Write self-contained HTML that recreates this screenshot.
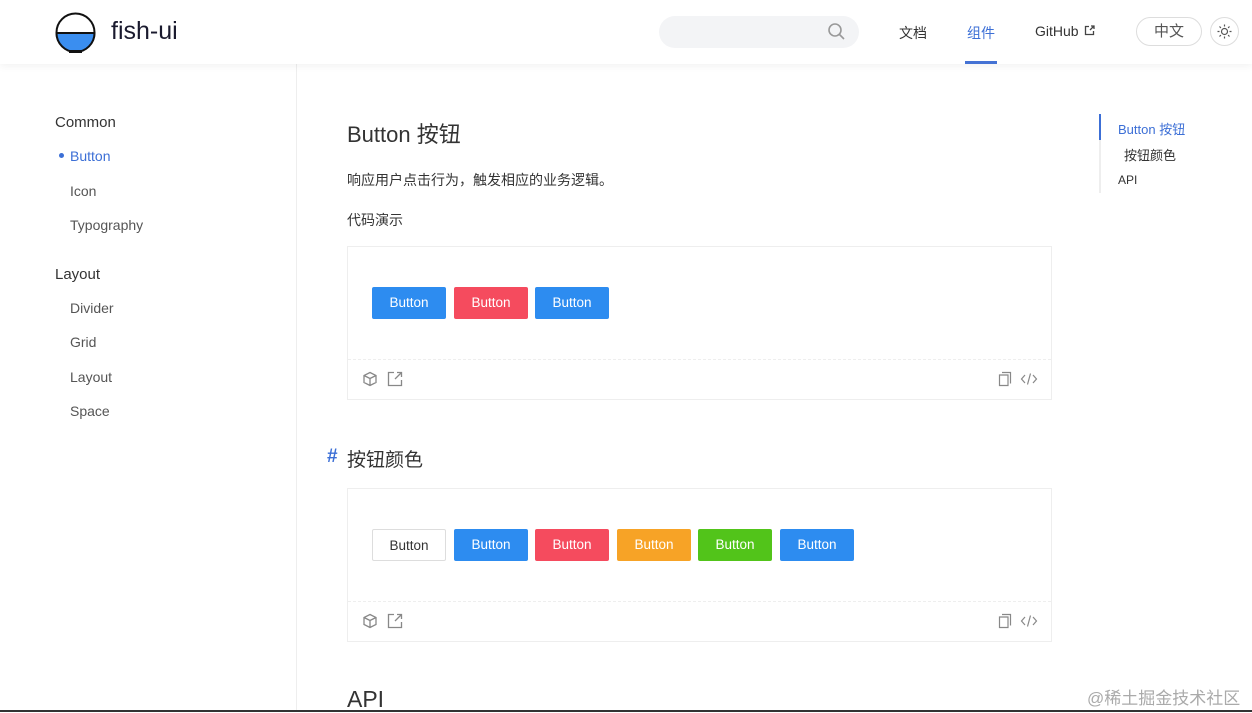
<!DOCTYPE html>
<html><head><meta charset="utf-8"><style>
*{margin:0;padding:0;box-sizing:border-box}
body{width:1252px;height:712px;overflow:hidden;background:#fff;font-family:"Liberation Sans","Noto Sans CJK SC",sans-serif;color:#333;position:relative}
.hdr{position:absolute;left:0;top:0;width:1252px;height:64px;background:#fff;box-shadow:0 2px 8px rgba(0,0,0,.06);z-index:2}
.abs{position:absolute}
.side{position:absolute;left:0;top:64px;width:297px;height:648px;border-right:1px solid #eee}
.grp{position:absolute;left:55px;font-size:15px;color:#333}
.it{position:absolute;left:70px;font-size:14px;color:#555}
.btn{position:absolute;height:32px;width:74px;color:#fff;font-size:13.5px;text-align:center;line-height:32px;border-radius:2px}
.box{position:absolute;left:347px;width:705px;border:1px solid #eee}
.foot{position:absolute;left:0;right:0;border-top:1px dashed #eee;height:40px}
.foot svg{position:absolute;top:11px}
</style></head><body>
<div class="hdr">
<svg class="abs" style="left:55px;top:12px" width="41" height="41" viewBox="0 0 41 41"><circle cx="20.5" cy="20.5" r="19" fill="#fff" stroke="#111" stroke-width="2"/><path d="M1.5 21 H39.5 A19 19 0 0 1 1.5 21Z" fill="#3a8ef0" stroke="#111" stroke-width="2"/><rect x="14" y="38" width="13" height="3" fill="#111"/></svg>
<div class="abs" style="left:111px;top:17px;font-size:25px;color:#1a1a2e;font-weight:500">fish-ui</div>
<div class="abs" style="left:659px;top:16px;width:200px;height:32px;border-radius:16px;background:#f3f4f6"></div>
<svg class="abs" style="left:827px;top:22px" width="20" height="20" viewBox="0 0 20 20" fill="none" stroke="#999" stroke-width="1.6"><circle cx="8" cy="8" r="6"/><path d="M12.5 12.5 L17 17"/></svg>
<div class="abs" style="left:899px;top:23px;font-size:14px;color:#333">文档</div>
<div class="abs" style="left:967px;top:23px;font-size:14px;color:#3c6fd6">组件</div>
<div class="abs" style="left:965px;top:61px;width:32px;height:3px;background:#4472d4"></div>
<div class="abs" style="left:1035px;top:23px;font-size:14px;color:#333">GitHub</div>
<svg class="abs" style="left:1084px;top:25px" width="11" height="11" viewBox="0 0 11 11" fill="none" stroke="#444" stroke-width="1.3"><path d="M5 1.5H1.5V9.5H9.5V6"/><path d="M6 5L10 1M7 1H10V4"/></svg>
<div class="abs" style="left:1136px;top:17px;width:66px;height:29px;border:1px solid #ddd;border-radius:15px;text-align:center;line-height:27px;font-size:15px;color:#555">中文</div>
<div class="abs" style="left:1210px;top:17px;width:29px;height:29px;border:1px solid #ddd;border-radius:50%"></div>
<svg class="abs" style="left:1216px;top:23px" width="17" height="17" viewBox="0 0 17 17" fill="none" stroke="#555" stroke-width="1.2"><circle cx="8.5" cy="8.5" r="3"/><path d="M8.5 1.5v2M8.5 13.5v2M1.5 8.5h2M13.5 8.5h2M3.5 3.5l1.4 1.4M12.1 12.1l1.4 1.4M3.5 13.5l1.4-1.4M12.1 4.9l1.4-1.4"/></svg>
</div>
<div class="side">
<div class="grp" style="top:50px">Common</div>
<div class="abs" style="left:59px;top:89px;width:5px;height:5px;border-radius:50%;background:#3c6fd6"></div>
<div class="it" style="top:84px;color:#3c6fd6">Button</div>
<div class="it" style="top:119px">Icon</div>
<div class="it" style="top:153px">Typography</div>
<div class="grp" style="top:202px">Layout</div>
<div class="it" style="top:236px">Divider</div>
<div class="it" style="top:270px">Grid</div>
<div class="it" style="top:305px">Layout</div>
<div class="it" style="top:339px">Space</div>
</div>
<div class="abs" style="left:347px;top:117px;font-size:22px;color:#333">Button 按钮</div>
<div class="abs" style="left:347px;top:170px;font-size:14px">响应用户点击行为，触发相应的业务逻辑。</div>
<div class="abs" style="left:347px;top:210px;font-size:14px">代码演示</div>
<div class="box" style="top:246px;height:154px">
<div class="btn" style="left:24px;top:40px;background:#2d8cf0">Button</div>
<div class="btn" style="left:106px;top:40px;background:#f54b5e">Button</div>
<div class="btn" style="left:187px;top:40px;background:#2d8cf0">Button</div>
<div class="foot" style="top:112px">
<svg style="left:14px" width="16" height="16" viewBox="0 0 16 16" fill="none" stroke="#888" stroke-width="1.3"><path d="M8 1.5L14 4.5V11.5L8 14.5L2 11.5V4.5Z M2 4.5L8 7.5L14 4.5 M8 7.5V14.5"/></svg>
<svg style="left:39px" width="16" height="16" viewBox="0 0 16 16" fill="none" stroke="#888" stroke-width="1.3"><path d="M7 1.5H1.5V14.5H14.5V9"/><path d="M8 8L14.5 1.5M10 1.5H14.5V6"/></svg>
<svg style="left:650px" width="14" height="16" viewBox="0 0 14 16" fill="none" stroke="#888" stroke-width="1.2"><path d="M4 1.5H12.5V12.5M1.5 4H10V14.5H1.5Z"/></svg>
<svg style="left:672px" width="18" height="16" viewBox="0 0 18 16" fill="none" stroke="#888" stroke-width="1.2"><path d="M5 4L1.5 8L5 12M13 4L16.5 8L13 12M10.5 2.5L7.5 13.5"/></svg>
</div></div>
<div class="abs" style="left:327px;top:446px;font-size:19px;color:#3c6fd6;font-weight:bold">#</div>
<div class="abs" style="left:347px;top:445px;font-size:19px;color:#333">按钮颜色</div>
<div class="box" style="top:488px;height:154px">
<div class="btn" style="left:24px;top:40px;background:#fff;color:#333;border:1px solid #ddd">Button</div>
<div class="btn" style="left:106px;top:40px;background:#2d8cf0">Button</div>
<div class="btn" style="left:187px;top:40px;background:#f54b5e">Button</div>
<div class="btn" style="left:269px;top:40px;background:#f7a326">Button</div>
<div class="btn" style="left:350px;top:40px;background:#52c41a">Button</div>
<div class="btn" style="left:432px;top:40px;background:#2d8cf0">Button</div>
<div class="foot" style="top:112px">
<svg style="left:14px" width="16" height="16" viewBox="0 0 16 16" fill="none" stroke="#888" stroke-width="1.3"><path d="M8 1.5L14 4.5V11.5L8 14.5L2 11.5V4.5Z M2 4.5L8 7.5L14 4.5 M8 7.5V14.5"/></svg>
<svg style="left:39px" width="16" height="16" viewBox="0 0 16 16" fill="none" stroke="#888" stroke-width="1.3"><path d="M7 1.5H1.5V14.5H14.5V9"/><path d="M8 8L14.5 1.5M10 1.5H14.5V6"/></svg>
<svg style="left:650px" width="14" height="16" viewBox="0 0 14 16" fill="none" stroke="#888" stroke-width="1.2"><path d="M4 1.5H12.5V12.5M1.5 4H10V14.5H1.5Z"/></svg>
<svg style="left:672px" width="18" height="16" viewBox="0 0 18 16" fill="none" stroke="#888" stroke-width="1.2"><path d="M5 4L1.5 8L5 12M13 4L16.5 8L13 12M10.5 2.5L7.5 13.5"/></svg>
</div></div>
<div class="abs" style="left:347px;top:686px;font-size:23px;color:#333">API</div>
<div class="abs" style="left:1099px;top:114px;width:2px;height:79px;background:#eee"></div>
<div class="abs" style="left:1099px;top:114px;width:2px;height:26px;background:#3c6fd6"></div>
<div class="abs" style="left:1118px;top:119px;font-size:13px;color:#3c6fd6">Button 按钮</div>
<div class="abs" style="left:1124px;top:145px;font-size:13px;color:#333">按钮颜色</div>
<div class="abs" style="left:1118px;top:173px;font-size:12px;color:#333">API</div>
<div class="abs" style="left:1087px;top:684px;font-size:17px;color:#aaa">@稀土掘金技术社区</div>
<div class="abs" style="left:0;top:710px;width:1252px;height:2px;background:#333"></div>
</body></html>
